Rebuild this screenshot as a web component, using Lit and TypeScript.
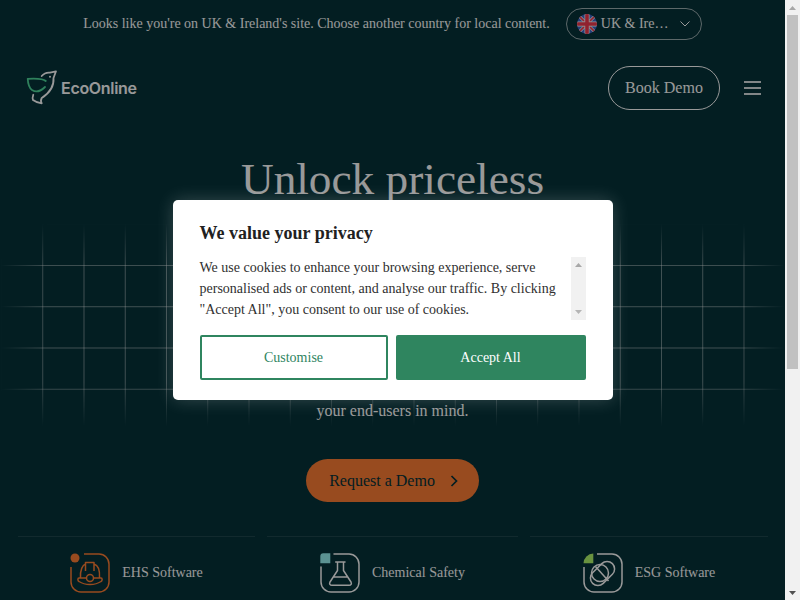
import { LitElement, html, css } from 'lit';
import { customElement } from 'lit/decorators.js';

@customElement('app-root')
export class AppRoot extends LitElement {
  static styles = css`
    :host {
      display: flex;
      height: 100vh;
      overflow: hidden;
      font-family: 'Liberation Serif', serif;
      color: #fff;
    }

    .page {
      position: relative;
      flex: 1;
      min-width: 0;
      background: #053239;
    }

    .scrollbar {
      display: flex;
      flex-direction: column;
      align-items: center;
      flex: none;
      width: 15px;
      background: #f1f1f1;
    }

    .scroll-arrow {
      display: flex;
      align-items: center;
      justify-content: center;
      flex: none;
      height: 15px;
    }

    .scroll-track {
      flex: 1;
      width: 100%;
    }

    .scroll-thumb {
      width: 11px;
      height: 354px;
      margin: 0 auto;
      background: #c1c1c1;
    }

    .country-bar {
      display: flex;
      align-items: center;
      justify-content: center;
      gap: 16px;
      height: 48px;
      font-size: 14px;
    }

    .country-select {
      display: flex;
      align-items: center;
      box-sizing: border-box;
      width: 136px;
      height: 32px;
      padding: 0 11px 0 10px;
      border: 1px solid rgba(255, 255, 255, 0.6);
      border-radius: 16px;
      white-space: nowrap;
    }

    .country-select svg {
      flex: none;
    }

    .country-select span {
      flex: 1;
      margin-left: 4px;
    }

    .site-header {
      display: flex;
      align-items: center;
      justify-content: space-between;
      padding: 18px 24px 0 26px;
    }

    .logo {
      display: flex;
      align-items: center;
      gap: 1px;
      font-family: Inter, sans-serif;
      font-size: 16px;
      font-weight: 600;
      letter-spacing: -0.3px;
    }

    .header-actions {
      display: flex;
      align-items: center;
      gap: 24px;
    }

    .book-demo {
      display: flex;
      align-items: center;
      justify-content: center;
      box-sizing: border-box;
      width: 112px;
      height: 44px;
      border: 1px solid #fff;
      border-radius: 22px;
      font-size: 16px;
    }

    .hamburger {
      display: flex;
      flex-direction: column;
      gap: 4px;
      width: 17px;
    }

    .hamburger i {
      display: block;
      height: 2px;
      background: rgba(255, 255, 255, 0.85);
    }

    .hero {
      position: relative;
      display: flex;
      flex-direction: column;
      align-items: center;
      padding-top: 40px;
    }

    .grid-lines {
      position: absolute;
      left: 0;
      right: 0;
      top: 113px;
      height: 204px;
      background-image:
        linear-gradient(to right, rgba(255, 255, 255, 0.42) 1px, transparent 1px),
        linear-gradient(to bottom, rgba(255, 255, 255, 0.42) 1px, transparent 1px);
      background-size: 41.25px 41.25px;
      background-position: 1px 0.75px;
      -webkit-mask-image:
        linear-gradient(to bottom, transparent, #000 22%, #000 78%, transparent),
        linear-gradient(to right, transparent, #000 6%, #000 94%, transparent);
      -webkit-mask-composite: source-in;
      mask-image:
        linear-gradient(to bottom, transparent, #000 22%, #000 78%, transparent),
        linear-gradient(to right, transparent, #000 6%, #000 94%, transparent);
      mask-composite: intersect;
    }

    h1 {
      position: relative;
      margin: 0;
      font-size: 45.3px;
      font-weight: 400;
      line-height: 58px;
    }

    .lead {
      position: relative;
      margin: 191px 0 0;
      font-size: 16px;
      line-height: 24px;
    }

    .cta {
      position: relative;
      display: flex;
      align-items: center;
      gap: 15px;
      box-sizing: border-box;
      height: 43px;
      margin-top: 36px;
      padding: 0 21px 0 23px;
      border-radius: 22px;
      background: #fd7d34;
      color: #053239;
      font-size: 16px;
    }

    .products {
      position: relative;
      display: grid;
      grid-template-columns: 237px 251px 238px;
      gap: 12px;
      margin-top: 34px;
      padding-left: 18px;
    }

    .product {
      display: flex;
      align-items: center;
      justify-content: center;
      gap: 12px;
      height: 72px;
      border-top: 1px solid rgba(255, 255, 255, 0.1);
      font-size: 14px;
    }

    .overlay {
      position: absolute;
      inset: 0;
      display: flex;
      align-items: center;
      justify-content: center;
      background: rgba(0, 0, 0, 0.4);
    }

    .modal {
      box-sizing: border-box;
      width: 440px;
      height: 200px;
      padding: 22px 27px 0;
      border-radius: 5px;
      background: #fff;
      color: #212121;
      box-shadow: 0 0 18px rgba(255, 255, 255, 0.2);
    }

    .modal h2 {
      margin: 0;
      font-size: 18px;
      font-weight: 700;
      line-height: 22px;
    }

    .modal-body {
      display: flex;
      height: 63px;
      margin-top: 13px;
      font-size: 14px;
      line-height: 21px;
    }

    .modal-body p {
      flex: 1;
      margin: 0;
      color: #303030;
    }

    .modal-scroll {
      display: flex;
      flex-direction: column;
      align-items: center;
      justify-content: space-between;
      flex: none;
      box-sizing: border-box;
      width: 15px;
      padding: 6px 0;
      background: #f1f1f1;
    }

    .modal-actions {
      display: grid;
      grid-template-columns: 188px 190px;
      gap: 8px;
      margin-top: 15px;
    }

    .modal-actions div {
      display: flex;
      align-items: center;
      justify-content: center;
      box-sizing: border-box;
      height: 45px;
      border: 2px solid #2f855f;
      border-radius: 2px;
      font-size: 14px;
    }

    .customise {
      color: #2f855f;
    }

    .accept {
      background: #2f855f;
      color: #fff;
    }
  `;

  private arrow(up: boolean, color: string) {
    return html`<svg width="7" height="4" viewBox="0 0 7 4"><path d=${up ? 'M0 4 3.500 0 7 4Z' : 'M0 0 3.500 4 7 0Z'} fill=${color}></path></svg>`;
  }

  private flag() {
    return html`<svg width="20" height="20" viewBox="0 0 20 20">
      <defs><clipPath id="flag-clip"><circle cx="10" cy="10" r="10"></circle></clipPath></defs>
      <g clip-path="url(#flag-clip)">
        <rect width="20" height="20" fill="#3d66c8"></rect>
        <path d="M0 0 20 20M20 0 0 20" stroke="#fff" stroke-width="3"></path>
        <path d="M0 0 20 20M20 0 0 20" stroke="#f0384e" stroke-width="1.600"></path>
        <path d="M10 0V20M0 10H20" stroke="#fff" stroke-width="5"></path>
        <path d="M10 0V20M0 10H20" stroke="#f0384e" stroke-width="3.600"></path>
      </g>
    </svg>`;
  }

  private logoMark() {
    return html`<svg width="34" height="36" viewBox="0 0 34 36" fill="none" stroke-linecap="round" stroke-linejoin="round">
      <path d="M19.800 11C17 8.500 10 8.300 1.700 8.800 2 14 3 18 6 20 10 22.500 15 21 19 17" stroke="#4fd79a" stroke-width="1.800"></path>
      <path d="M15.700 6C18 3.200 21 2.300 24 2.600L30 1.300 27.500 8C28 14 25 22 15.700 28 14.700 30 14.500 31.500 15.700 33.300 13 33 9 31.500 7 30 6.500 29 6.500 27 7.300 24.800" stroke="#fff" stroke-width="1.800"></path>
      <circle cx="24" cy="6.800" r="1" fill="#fff"></circle>
    </svg>`;
  }

  private helmetIcon() {
    return html`<svg width="40" height="40" viewBox="0 0 40 40" fill="none" stroke="#fd7d34" stroke-width="1.500" stroke-linejoin="round">
      <path d="M14 1H29A10 10 0 0 1 39 11V29A10 10 0 0 1 29 39H11A10 10 0 0 1 1 29V14"></path>
      <circle cx="5" cy="5" r="4.500" fill="#fd7d34" stroke="none"></circle>
      <path d="M10.500 25C10 17 12.500 12 15.500 11M24 11C27.500 12 30 17 29.500 25M15.500 18V9.500H24V18"></path>
      <path d="M16.500 25H9C7.500 25 7.500 28 9 28.500 12 30.500 16 31.500 20 31.500 24 31.500 28 30.500 31 28.500 32.500 28 32.500 25 31 25H23.500"></path>
      <circle cx="20" cy="25" r="3.500"></circle>
    </svg>`;
  }

  private flaskIcon() {
    return html`<svg width="40" height="40" viewBox="0 0 40 40" fill="none" stroke="#fff" stroke-width="1.500" stroke-linejoin="round" stroke-linecap="round">
      <path d="M14 1H29A10 10 0 0 1 39 11V29A10 10 0 0 1 29 39H11A10 10 0 0 1 1 29V14"></path>
      <path d="M0.300 10.300V3.300A3 3 0 0 1 3.300 0.300H10.300V10.300Z" fill="#98f3f3" stroke="none"></path>
      <path d="M15.700 9H25M17.500 9V17.500L10 29C9 31 10 32.300 12 32.300H29C31 32.300 32 31 31 29L23.500 17.500V9M13.500 24H27.500"></path>
    </svg>`;
  }

  private esgIcon() {
    return html`<svg width="40" height="40" viewBox="0 0 40 40" fill="none" stroke="#fff" stroke-width="1.500" stroke-linejoin="round">
      <path d="M14 1H29A10 10 0 0 1 39 11V29A10 10 0 0 1 29 39H11A10 10 0 0 1 1 29V14"></path>
      <path d="M0.500 10.300A10 10 0 0 1 10.300 0.500V10.300Z" fill="#aff56b" stroke="none"></path>
      <circle cx="17" cy="20" r="8.500"></circle>
      <rect x="5.500" y="13" width="28" height="15" rx="7.500" transform="rotate(-45 19.500 20.500)"></rect>
      <path d="M12.500 13.500 25.500 28"></path>
    </svg>`;
  }

  render() {
    return html`
      <div class="page">
        <div class="country-bar">
          <div>Looks like you're on UK &amp; Ireland's site. Choose another country for local content.</div>
          <div class="country-select">
            ${this.flag()}
            <span>UK &amp; Ire…</span>
            <svg width="10" height="6" viewBox="0 0 10 6" fill="none" stroke="#fff" stroke-width="1"><path d="M0.500 0.500 5 5 9.500 0.500"></path></svg>
          </div>
        </div>

        <header class="site-header">
          <div class="logo">${this.logoMark()}<span>EcoOnline</span></div>
          <div class="header-actions">
            <div class="book-demo">Book Demo</div>
            <div class="hamburger"><i></i><i></i><i></i></div>
          </div>
        </header>

        <section class="hero">
          <div class="grid-lines"></div>
          <h1>Unlock priceless</h1>
          <div class="lead">your end-users in mind.</div>
          <div class="cta">
            Request a Demo
            <svg width="8" height="12" viewBox="0 0 8 12" fill="none" stroke="#053239" stroke-width="1.700"><path d="M1.500 1 6.500 6 1.500 11"></path></svg>
          </div>
        </section>

        <div class="products">
          <div class="product">${this.helmetIcon()}<span>EHS Software</span></div>
          <div class="product">${this.flaskIcon()}<span>Chemical Safety</span></div>
          <div class="product">${this.esgIcon()}<span>ESG Software</span></div>
        </div>

        <div class="overlay">
          <div class="modal">
            <h2>We value your privacy</h2>
            <div class="modal-body">
              <p>We use cookies to enhance your browsing experience, serve personalised ads or content, and analyse our traffic. By clicking "Accept All", you consent to our use of cookies.</p>
              <div class="modal-scroll">${this.arrow(true, '#a8a8a8')}${this.arrow(false, '#b5b5b5')}</div>
            </div>
            <div class="modal-actions">
              <div class="customise">Customise</div>
              <div class="accept">Accept All</div>
            </div>
          </div>
        </div>
      </div>

      <div class="scrollbar">
        <div class="scroll-arrow">${this.arrow(true, '#a8a8a8')}</div>
        <div class="scroll-track"><div class="scroll-thumb"></div></div>
        <div class="scroll-arrow">${this.arrow(false, '#505050')}</div>
      </div>
    `;
  }
}
